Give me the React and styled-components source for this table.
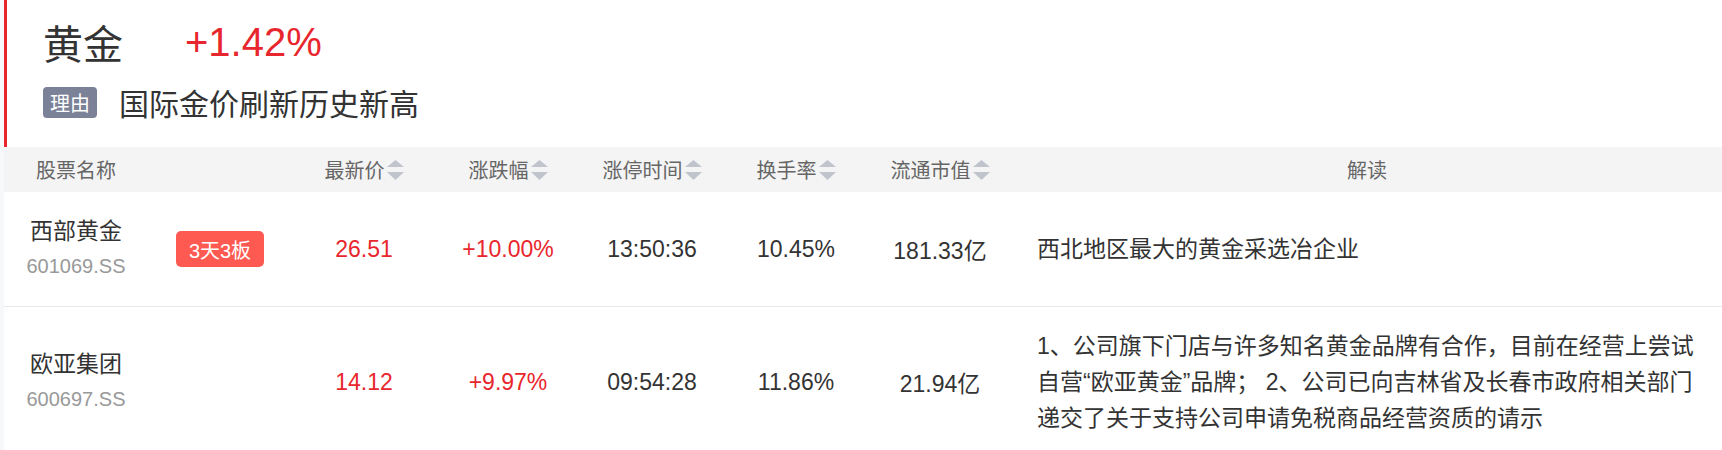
import React from 'react'
import styled, { createGlobalStyle } from 'styled-components'

const GlobalStyle = createGlobalStyle`
    body {
        margin: 0;
        background: #f7f8fa;
        font-family: "Liberation Sans", "Noto Sans CJK SC", sans-serif;
    }
`

const stocks = [
    {
        name: '西部黄金',
        code: '601069.SS',
        tag: '3天3板',
        price: '26.51',
        change: '+10.00%',
        time: '13:50:36',
        turnover: '10.45%',
        cap: '181.33亿',
        note: '西北地区最大的黄金采选冶企业',
    },
    {
        name: '欧亚集团',
        code: '600697.SS',
        price: '14.12',
        change: '+9.97%',
        time: '09:54:28',
        turnover: '11.86%',
        cap: '21.94亿',
        note: '1、公司旗下门店与许多知名黄金品牌有合作，目前在经营上尝试自营“欧亚黄金”品牌； 2、公司已向吉林省及长春市政府相关部门递交了关于支持公司申请免税商品经营资质的请示',
    },
]

const sortable = ['最新价', '涨跌幅', '涨停时间', '换手率', '流通市值']

function SortIcon() {
    return (
        <SortSvg viewBox="0 0 17 20" width="17" height="20">
            <polygon points="0,7 8.5,0 17,7" />
            <polygon points="0,12 8.5,20 17,12" />
        </SortSvg>
    )
}

export default function App() {
    return (
        <Page>
            <GlobalStyle />
            <Card>
                <Summary>
                    <TitleRow>
                        <Title>黄金</Title>
                        <Change>+1.42%</Change>
                    </TitleRow>
                    <ReasonRow>
                        <ReasonTag>理由</ReasonTag>
                        <ReasonText>国际金价刷新历史新高</ReasonText>
                    </ReasonRow>
                </Summary>

                <HeadRow>
                    <HeadCell>股票名称</HeadCell>
                    <HeadCell />
                    {sortable.map(h => (
                        <HeadCell key={h}>
                            {h}
                            <SortIcon />
                        </HeadCell>
                    ))}
                    <HeadCell>解读</HeadCell>
                </HeadRow>

                {stocks.map(s => (
                    <Row key={s.code}>
                        <NameCell>
                            <Name>{s.name}</Name>
                            <Code>{s.code}</Code>
                        </NameCell>
                        <Cell>{s.tag && <Badge>{s.tag}</Badge>}</Cell>
                        <Cell up>{s.price}</Cell>
                        <Cell up>{s.change}</Cell>
                        <Cell>{s.time}</Cell>
                        <Cell>{s.turnover}</Cell>
                        <Cell>{s.cap}</Cell>
                        <Note>{s.note}</Note>
                    </Row>
                ))}
            </Card>
        </Page>
    )
}

const Page = styled.div`
    padding-left: 4px;
`

const Card = styled.div`
    background: #fff;
`

const Summary = styled.div`
    border-left: 3px solid #e8262d;
    padding: 18px 0 27px 36px;
`

const TitleRow = styled.div`
    display: flex;
    align-items: center;
    height: 48px;
`

const Title = styled.div`
    font-size: 40px;
    color: #333;
`

const Change = styled.div`
    font-size: 40px;
    color: #e8262d;
    margin-left: 62px;
`

const ReasonRow = styled.div`
    display: flex;
    align-items: center;
    height: 36px;
    margin-top: 18px;
`

const ReasonTag = styled.span`
    display: inline-flex;
    align-items: center;
    height: 31px;
    padding: 0 7px;
    border-radius: 4px;
    background: #7b8197;
    color: #fff;
    font-size: 20px;
`

const ReasonText = styled.span`
    margin-left: 22px;
    font-size: 30px;
    color: #333;
`

const grid = `
    display: grid;
    grid-template-columns: repeat(7, 144px) 1fr;
`

const HeadRow = styled.div`
    ${grid}
    height: 45px;
    background: #f4f4f4;
`

const HeadCell = styled.div`
    display: flex;
    align-items: center;
    justify-content: center;
    font-size: 20px;
    color: #666;
`

const SortSvg = styled.svg`
    margin-left: 2px;
    fill: #c0c4cc;
`

const Row = styled.div`
    ${grid}
    border-bottom: 1px solid #e8e8e8;
`

const Cell = styled.div`
    display: flex;
    align-items: center;
    justify-content: center;
    font-size: 23px;
    color: ${props => props.up ? '#e8262d' : '#333'};
`

const NameCell = styled.div`
    display: flex;
    flex-direction: column;
    align-items: center;
    justify-content: center;
    padding: 22px 0;
`

const Name = styled.div`
    font-size: 23px;
    line-height: 35px;
    color: #333;
`

const Code = styled.div`
    font-size: 20px;
    line-height: 35px;
    color: #999;
`

const Badge = styled.span`
    display: inline-flex;
    align-items: center;
    height: 36px;
    padding: 0 13px;
    border-radius: 5px;
    background: #ff5a52;
    color: #fff;
    font-size: 20px;
`

const Note = styled.div`
    display: flex;
    align-items: center;
    padding: 21px 20px 21px 25px;
    font-size: 23px;
    line-height: 36px;
    color: #333;
`
